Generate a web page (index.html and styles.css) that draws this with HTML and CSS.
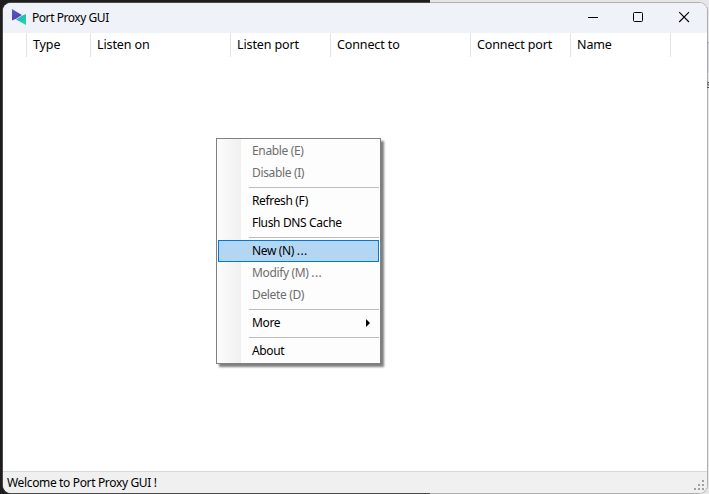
FILE: index.html
```html
<!DOCTYPE html>
<html lang="en">
<head>
<meta charset="utf-8">
<title>Port Proxy GUI</title>
<link rel="stylesheet" href="styles.css">
</head>
<body>
<div class="backdrop"><div class="backdrop-dark"></div><div class="backdrop-light"><span class="peek">s</span></div></div>
<main class="window">
  <header class="titlebar">
    <svg class="logo" width="16" height="18" viewBox="0 0 16 18">
      <defs>
        <linearGradient id="violet" x1="0" y1="0" x2=".4" y2="1"><stop offset="0" stop-color="#3c6cc4"/><stop offset="1" stop-color="#6531b5"/></linearGradient>
        <linearGradient id="teal" x1="0" y1="0" x2=".5" y2="1"><stop offset="0" stop-color="#25a9b4"/><stop offset="1" stop-color="#26d3b0"/></linearGradient>
      </defs>
      <path d="M1 1 10.8 7 5.5 10.6 1 12.5Z" fill="url(#violet)"/>
      <path d="M15 6V17L5 11.6 10.5 8Z" fill="url(#teal)"/>
    </svg>
    <h1 class="title">Port Proxy GUI</h1>
    <div class="controls">
      <svg width="46" height="30" viewBox="0 0 46 30"><path d="M19 14.5H29" stroke="#000"/></svg>
      <svg width="46" height="30" viewBox="0 0 46 30"><rect x="18.5" y="9.5" width="9" height="9" rx="1" fill="none" stroke="#000"/></svg>
      <svg width="46" height="30" viewBox="0 0 46 30"><path d="M18.2 9.2 28 19M28 9.2 18.2 19" stroke="#000" stroke-width="1.1"/></svg>
    </div>
  </header>
  <div class="columns">
    <span class="col"></span><span class="col">Type</span><span class="col">Listen on</span><span class="col">Listen port</span><span class="col">Connect to</span><span class="col">Connect port</span><span class="col">Name</span>
  </div>
  <section class="list"></section>
  <footer class="status">
    <span class="message">Welcome to Port Proxy GUI !</span>
    <svg class="grip" width="11" height="11" viewBox="0 0 11 11"><path d="M8 0h2v2h-2zM4 4h2v2H4zM8 4h2v2H8zM0 8h2v2H0zM4 8h2v2H4zM8 8h2v2H8z" fill="#a0a0a0"/></svg>
  </footer>
</main>
<nav class="menu">
  <div class="item disabled">Enable (E)</div>
  <div class="item disabled">Disable (I)</div>
  <div class="sep"></div>
  <div class="item">Refresh (F)</div>
  <div class="item">Flush DNS Cache</div>
  <div class="sep"></div>
  <div class="item selected">New (N) <span class="dots">...</span></div>
  <div class="item disabled">Modify (M) <span class="dots">...</span></div>
  <div class="item disabled">Delete (D)</div>
  <div class="sep"></div>
  <div class="item">More<svg class="arrow" width="4" height="8" viewBox="0 0 4 8"><path d="M0 0 4 4 0 8Z"/></svg></div>
  <div class="sep"></div>
  <div class="item">About</div>
</nav>
</body>
</html>
```
FILE: styles.css
```css
* { box-sizing: border-box; }
body {
  margin: 0;
  width: 709px;
  height: 494px;
  overflow: hidden;
  position: relative;
  font: 12px/16px "Noto Sans", "Open Sans", sans-serif;
  color: #000;
}
.backdrop { position: absolute; inset: 0; display: flex; }
.backdrop-dark { width: 430px; background: #1f1d1e; }
.backdrop-light { flex: 1; position: relative; background: linear-gradient(#e6e6e6 0 42px, #b5b5b8 42px 43px, #d9d9de 43px 73px, #e6e6e6 73px); }
.peek { position: absolute; right: -2px; top: 76px; color: #223; font-size: 11px; }
.window {
  position: relative;
  width: 704px;
  height: 490px;
  margin: 3px 0 0 3px;
  display: flex;
  flex-direction: column;
  background: #fff;
  border-radius: 8px;
  overflow: hidden;
  box-shadow: 0 0 0 1px rgba(120, 120, 120, .5);
}
.titlebar { height: 30px; display: flex; align-items: center; padding-left: 8px; background: #f0f2f9; }
.logo { margin-top: -2px; }
.title { margin: 0 0 0 5px; font-size: 12px; font-weight: 400; letter-spacing: -.45px; }
.controls { margin-left: auto; display: flex; }
.columns { height: 24px; display: grid; grid-template-columns: 24px 64px 140px 100px 140px 100px 100px; }
.col { border-right: 1px solid #e5e5e5; padding-left: 6px; font-size: 12.5px; line-height: 24px; letter-spacing: -.12px; white-space: nowrap; }
.list { flex: 1; }
.status { height: 22px; display: flex; align-items: center; justify-content: space-between; padding: 1px 2px 0 4px; border-top: 1px solid #d7d7d7; background: #f0f0f0; }
.message { letter-spacing: -.35px; }
.grip { margin-top: 5px; }
.menu {
  position: absolute;
  left: 216px;
  top: 138px;
  width: 165px;
  height: 226px;
  padding: 1px;
  border: 1px solid #808080;
  background: linear-gradient(90deg, #fcfcfc, #f0f0f0 24px, #fdfdfd 24px);
  box-shadow: 3px 3px 2px rgba(0, 0, 0, .5);
}
.item { height: 22px; padding: 0 9px 0 34px; display: flex; align-items: center; letter-spacing: -.35px; white-space: pre; }
.dots { letter-spacing: .35px; }
.disabled { color: #6d6d6d; }
.selected { background: #b3d7f3; border: 1px solid #0078d7; padding-left: 33px; }
.sep { height: 6px; margin-left: 31px; padding-top: 3px; }
.sep::before { content: ""; display: block; height: 1px; background: #bdbdbd; }
.arrow { margin-left: auto; }
```
